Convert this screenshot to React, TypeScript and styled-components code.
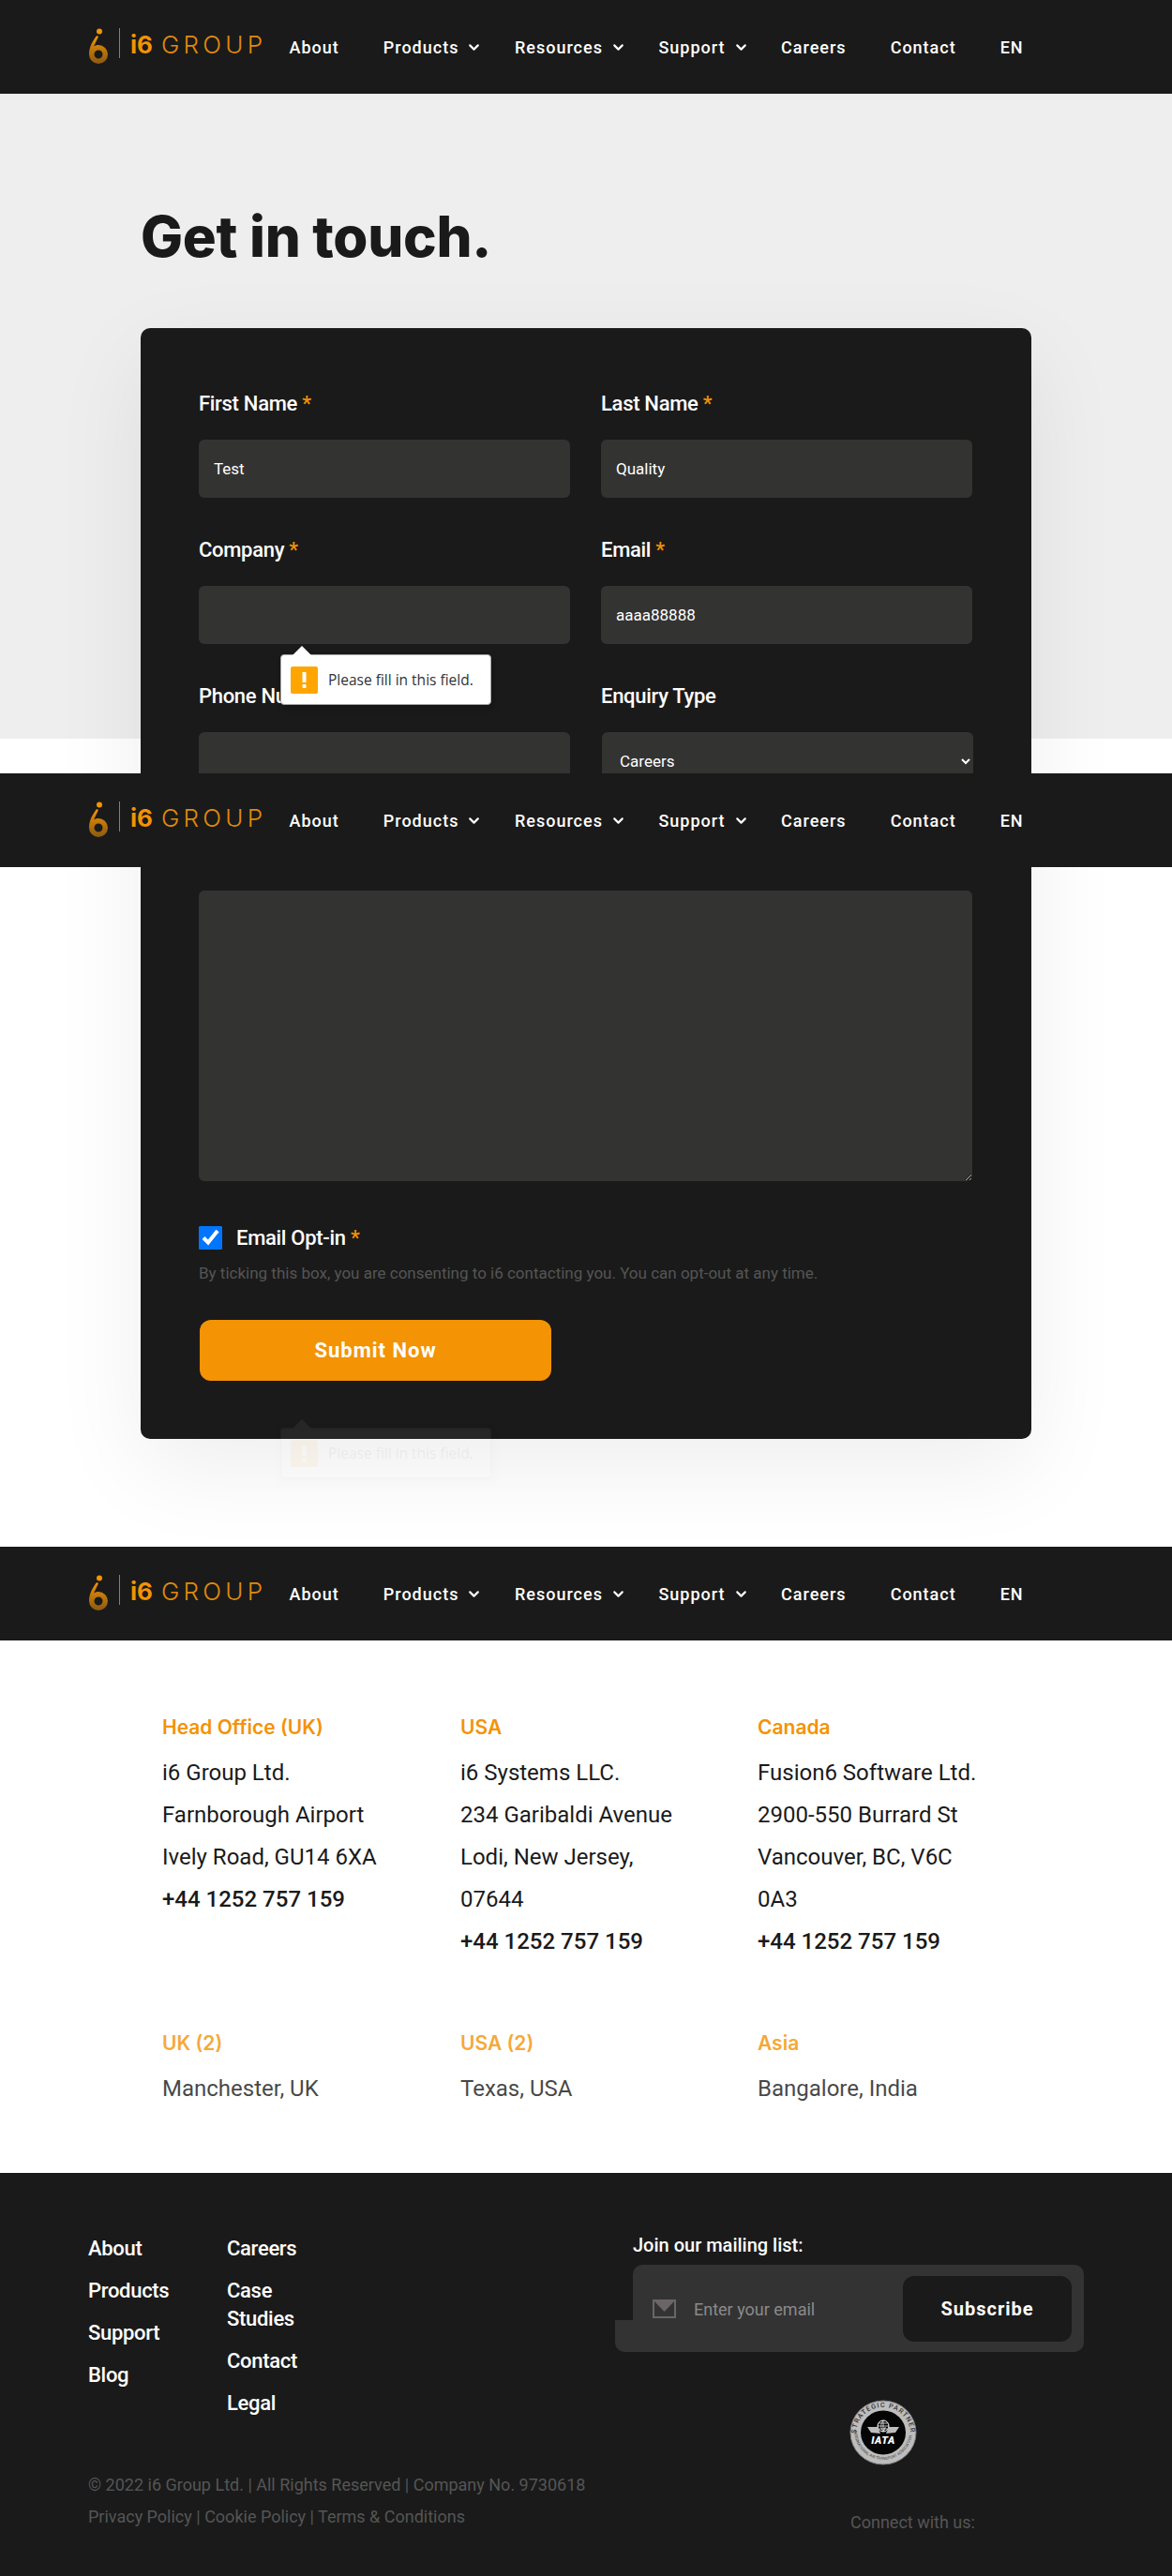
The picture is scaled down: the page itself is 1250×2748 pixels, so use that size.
import React from 'react';
import styled, { createGlobalStyle } from 'styled-components';
import { ChevronDown } from 'lucide-react';

const GlobalStyle = createGlobalStyle`
  html, body {
    margin: 0;
    padding: 0;
    background: #fff;
  }
  body {
    font-family: Roboto, "Liberation Sans", sans-serif;
    color: #1a1a1a;
  }
  * {
    box-sizing: border-box;
  }
`;

const Page = styled.div`
  position: relative;
  width: 1250px;
  height: 2748px;
  overflow: hidden;
`;

/* the header is fixed on the real page, so a stitched capture shows it three times */
const Header = styled.header<{ $top: number }>`
  position: absolute;
  top: ${(p) => p.$top}px;
  left: 0;
  z-index: 5;
  width: 100%;
  height: 100px;
  padding-left: 94px;
  display: flex;
  align-items: center;
  background: #1a1a1a;
`;

const LogoWrap = styled.svg`
  display: block;
  width: 190px;
  height: 44px;
  margin-right: 1px;
`;

const NavLink = styled.a<{ $dropdown?: boolean }>`
  display: flex;
  align-items: center;
  gap: 8px;
  padding: 0 ${(p) => (p.$dropdown ? '11px' : '23.5px')} 0 23.5px;
  color: #fff;
  font-size: 18px;
  font-weight: 500;
  letter-spacing: 1px;
  white-space: nowrap;
`;

const ContactSection = styled.section`
  height: 1650px;
  padding: 215px 0 0 150px;
  background: linear-gradient(#eeeeee 788px, #fff 788px);
`;

const Title = styled.h1`
  margin: 0 0 61px;
  height: 74px;
  font-family: Inter, "Liberation Sans", sans-serif;
  font-size: 60px;
  line-height: 74px;
  font-weight: 800;
  letter-spacing: -0.3px;
  color: #1a1a1a;
`;

const Card = styled.form`
  width: 950px;
  padding: 62px 63px 62px 62px;
  background: #1a1a1a;
  border-radius: 10px;
  box-shadow: 0 30px 100px rgba(0, 0, 0, 0.07);
`;

const FieldGrid = styled.div`
  display: grid;
  grid-template-columns: 396px 396px;
  column-gap: 33px;
  row-gap: 37px;
`;

const Field = styled.div`
  display: flex;
  flex-direction: column;
`;

const Label = styled.label`
  height: 38px;
  margin-bottom: 19px;
  color: #fff;
  font-size: 22px;
  line-height: 38px;
  font-weight: 500;
  letter-spacing: -0.3px;
`;

const Required = styled.span`
  color: #f49303;
`;

const Input = styled.input`
  width: 100%;
  height: 62px;
  padding: 0 16px;
  border: 0;
  border-radius: 6px;
  outline: 0;
  background: #333332;
  color: #fff;
  font-family: Roboto, sans-serif;
  font-size: 17px;
`;

const Select = styled.select`
  width: 396px;
  height: 62px;
  margin-left: 1px;
  padding: 0 15px;
  border: 0;
  border-radius: 6px;
  background-color: #333332;
  color: #fff;
  font-family: Roboto, sans-serif;
  font-size: 17px;
`;

const Message = styled.textarea`
  display: block;
  width: 825px;
  height: 310px;
  margin-top: 107px;
  padding: 16px;
  border: 0;
  border-radius: 6px;
  outline: 0;
  background: #333332;
  color: #fff;
  resize: vertical;
`;

const OptRow = styled.div`
  display: flex;
  align-items: center;
  gap: 15px;
  margin-top: 48px;
  height: 25px;
`;

const OptBox = styled.input`
  width: 25px;
  height: 25px;
  margin: 0;
  accent-color: #0075ff;
`;

const OptLabel = styled.label`
  color: #fff;
  font-size: 22px;
  line-height: 25px;
  font-weight: 500;
  letter-spacing: -0.3px;
`;

const OptHint = styled.p`
  margin: 13px 0 0;
  color: #555;
  font-size: 17px;
  line-height: 24px;
`;

const SubmitButton = styled.button`
  display: block;
  width: 375px;
  height: 65px;
  margin: 38px 0 0 1px;
  border: 0;
  border-radius: 12px;
  background: #f49303;
  color: #fff;
  font-family: Roboto, sans-serif;
  font-size: 22px;
  font-weight: 700;
  letter-spacing: 1px;
`;

const Tooltip = styled.div<{ $top: number; $ghost?: boolean }>`
  position: absolute;
  top: ${(p) => p.$top}px;
  left: 299px;
  z-index: 3;
  width: 225px;
  height: 54px;
  padding-left: 10px;
  display: flex;
  align-items: center;
  gap: 11px;
  background: #fff;
  border: 1px solid #a8a8a8;
  border-radius: 4px;
  box-shadow: 2px 3px 6px rgba(0, 0, 0, 0.25);
  color: #333;
  font-family: "Open Sans", sans-serif;
  font-size: 15.5px;
  white-space: nowrap;
  opacity: ${(p) => (p.$ghost ? 0.05 : 1)};

  &::before {
    content: '';
    position: absolute;
    top: -10px;
    left: 12px;
    width: 20px;
    height: 10px;
    background: #fff;
    clip-path: polygon(50% 0, 100% 100%, 0 100%);
  }
`;

const WarnIcon = styled.svg`
  flex: none;
  width: 29px;
  height: 29px;
`;

const OfficeSection = styled.section`
  height: 668px;
  padding: 175px 0 0 173px;
`;

const OfficeGrid = styled.div`
  display: grid;
  grid-template-columns: 318px 317px 250px;
  row-gap: 68px;
`;

const Office = styled.div<{ $muted?: boolean }>`
  width: 250px;
  opacity: ${(p) => (p.$muted ? 0.8 : 1)};
`;

const OfficeName = styled.h3`
  margin: 0 0 8px;
  color: #f49303;
  font-family: Inter, sans-serif;
  font-size: 21px;
  line-height: 36px;
  font-weight: 600;
`;

const OfficeLine = styled.div<{ $strong?: boolean }>`
  color: #1a1a1a;
  font-size: 24px;
  line-height: 45px;
  font-weight: ${(p) => (p.$strong ? 500 : 400)};
`;

const Footer = styled.footer`
  height: 430px;
  padding: 66px 0 0 94px;
  display: flex;
  background: #1a1a1a;
`;

const FooterLeft = styled.div`
  width: 581px;
`;

const LinkColumns = styled.div`
  display: flex;
  height: 206px;
`;

const LinkColumn = styled.div<{ $width: number }>`
  width: ${(p) => p.$width}px;
  display: flex;
  flex-direction: column;
  gap: 15px;
`;

const FooterLink = styled.a`
  color: #fff;
  font-size: 22px;
  line-height: 30px;
  font-weight: 500;
  letter-spacing: -0.3px;
`;

const Legal = styled.div`
  margin-top: 44px;
  color: #555;
  font-size: 18px;
  line-height: 34px;
`;

const FooterRight = styled.div`
  width: 481px;
`;

const JoinTitle = styled.div`
  color: #fff;
  font-size: 20px;
  line-height: 22px;
  font-weight: 500;
`;

const MailBox = styled.div`
  position: relative;
  width: 481px;
  height: 93px;
  margin-top: 10px;
  padding: 12px 12px 0 21px;
  display: flex;
  align-items: flex-start;
  background: #333;
  border-radius: 10px;

  &::before {
    content: '';
    position: absolute;
    left: -19px;
    bottom: 0;
    width: 40px;
    height: 34px;
    background: #333;
    border-radius: 0 0 0 10px;
  }
`;

const MailIcon = styled.svg`
  position: relative;
  flex: none;
  width: 25px;
  height: 20px;
  margin-top: 25px;
`;

const MailInput = styled.input`
  position: relative;
  width: 223px;
  height: 70px;
  margin-left: 19px;
  padding: 0;
  border: 0;
  outline: 0;
  background: transparent;
  color: #fff;
  font-family: Roboto, sans-serif;
  font-size: 18px;

  &::placeholder {
    color: #8a8a8a;
    opacity: 1;
  }
`;

const SubscribeButton = styled.button`
  width: 180px;
  height: 70px;
  border: 0;
  border-radius: 12px;
  background: #1a1a1a;
  color: #fff;
  font-family: Roboto, sans-serif;
  font-size: 20px;
  font-weight: 700;
  letter-spacing: 1px;
`;

const Badge = styled.svg`
  display: block;
  width: 72px;
  height: 70px;
  margin: 51px 0 0 231px;
`;

const Connect = styled.div`
  margin: 44px 0 0 232px;
  color: #555;
  font-size: 18px;
  line-height: 34px;
`;

const Logo = () => (
  <LogoWrap viewBox="0 0 190 44">
    <defs>
      <linearGradient id="logoFade" x1="0" y1="0" x2="0" y2="1">
        <stop offset="0" stopColor="#f49303" />
        <stop offset="1" stopColor="#8a5a12" />
      </linearGradient>
    </defs>
    <circle cx="12" cy="5.5" r="3" fill="#f49303" />
    <path
      d="M9 10 C3 18 1 24 1 30 a10 10 0 1 0 10 -10 c-2 0 -4 .6 -5 1.5 L11 11 Z M11 25.5 a4.5 4.5 0 1 1 0 9 a4.5 4.5 0 0 1 0 -9 Z"
      fill="url(#logoFade)"
      fillRule="evenodd"
    />
    <rect x="33" y="2" width="1" height="32" fill="#b77a14" />
    <text x="45" y="29" fontFamily="Inter, sans-serif" fontSize="26" fontWeight="700" fill="#f49303" textLength="24">
      i6
    </text>
    <text x="78" y="29" fontFamily="Inter, sans-serif" fontSize="26" fontWeight="300" fill="#e08a0a" textLength="108">
      GROUP
    </text>
  </LogoWrap>
);

const SiteHeader = ({ top }: { top: number }) => (
  <Header $top={top}>
    <Logo />
    <NavLink>About</NavLink>
    <NavLink $dropdown>
      Products <ChevronDown size={17} strokeWidth={3} />
    </NavLink>
    <NavLink $dropdown>
      Resources <ChevronDown size={17} strokeWidth={3} />
    </NavLink>
    <NavLink $dropdown>
      Support <ChevronDown size={17} strokeWidth={3} />
    </NavLink>
    <NavLink>Careers</NavLink>
    <NavLink>Contact</NavLink>
    <NavLink>EN</NavLink>
  </Header>
);

const FieldTip = ({ top, ghost }: { top: number; ghost?: boolean }) => (
  <Tooltip $top={top} $ghost={ghost}>
    <WarnIcon viewBox="0 0 29 29">
      <rect width="29" height="29" rx="2" fill="#ffa500" />
      <rect x="12.5" y="6" width="4" height="11" fill="#fff" />
      <rect x="12.5" y="19" width="4" height="4" rx="1" fill="#fff" />
    </WarnIcon>
    Please fill in this field.
  </Tooltip>
);

const IataBadge = () => (
  <Badge viewBox="0 0 72 70">
    <defs>
      <path id="arcTop" d="M7 36 A29 28 0 0 1 65 36" />
      <path id="arcBottom" d="M5 33 A31 31 0 0 0 67 33" />
    </defs>
    <ellipse cx="36" cy="35" rx="35" ry="34" fill="#bdbdbd" stroke="#7d7d7d" />
    <ellipse cx="36" cy="35" rx="24" ry="23.5" fill="#050505" />
    <text fontFamily="Roboto, sans-serif" fontSize="7.2" fill="#333" fontWeight="500">
      <textPath href="#arcTop" textLength="88">
        STRATEGIC PARTNER
      </textPath>
    </text>
    <text fontFamily="Roboto, sans-serif" fontSize="4.2" fill="#444">
      <textPath href="#arcBottom" textLength="92">
        INTERNATIONAL AIR TRANSPORT ASSOCIATION
      </textPath>
    </text>
    <circle cx="36" cy="28" r="6" fill="none" stroke="#fff" strokeWidth="1" />
    <path d="M30 28 H42 M36 22 V34 M31 25 H41 M31 31 H41" stroke="#fff" strokeWidth=".7" />
    <path d="M36 22 C33 25 33 31 36 34 C39 31 39 25 36 34" fill="none" stroke="#fff" strokeWidth=".6" />
    <path d="M19 29 L30 29 L33 36 L23 35 Z M53 29 L42 29 L39 36 L49 35 Z" fill="#bdbdbd" />
    <text x="36" y="47" textAnchor="middle" fontFamily="Roboto, sans-serif" fontSize="11" fontStyle="italic" fontWeight="900" fill="#fff" letterSpacing=".6">
      IATA
    </text>
  </Badge>
);

const offices = [
  { name: 'Head Office (UK)', lines: ['i6 Group Ltd.', 'Farnborough Airport', 'Ively Road, GU14 6XA'], phone: '+44 1252 757 159' },
  { name: 'USA', lines: ['i6 Systems LLC.', '234 Garibaldi Avenue', 'Lodi, New Jersey, 07644'], phone: '+44 1252 757 159' },
  { name: 'Canada', lines: ['Fusion6 Software Ltd.', '2900-550 Burrard St', 'Vancouver, BC, V6C 0A3'], phone: '+44 1252 757 159' },
  { name: 'UK (2)', lines: ['Manchester, UK'], muted: true },
  { name: 'USA (2)', lines: ['Texas, USA'], muted: true },
  { name: 'Asia', lines: ['Bangalore, India'], muted: true },
];

const App: React.FC = () => {
  return (
    <Page>
      <GlobalStyle />
      <SiteHeader top={0} />
      <SiteHeader top={825} />
      <SiteHeader top={1650} />
      <FieldTip top={698} />
      <FieldTip top={1523} ghost />

      <ContactSection>
        <Title>Get in touch.</Title>
        <Card onSubmit={(e) => e.preventDefault()}>
          <FieldGrid>
            <Field>
              <Label>
                First Name <Required>*</Required>
              </Label>
              <Input defaultValue="Test" />
            </Field>
            <Field>
              <Label>
                Last Name <Required>*</Required>
              </Label>
              <Input defaultValue="Quality" />
            </Field>
            <Field>
              <Label>
                Company <Required>*</Required>
              </Label>
              <Input />
            </Field>
            <Field>
              <Label>
                Email <Required>*</Required>
              </Label>
              <Input defaultValue="aaaa88888" />
            </Field>
            <Field>
              <Label>Phone Number</Label>
              <Input />
            </Field>
            <Field>
              <Label>Enquiry Type</Label>
              <Select defaultValue="Careers">
                <option>Careers</option>
              </Select>
            </Field>
          </FieldGrid>
          <Message />
          <OptRow>
            <OptBox type="checkbox" defaultChecked />
            <OptLabel>
              Email Opt-in <Required>*</Required>
            </OptLabel>
          </OptRow>
          <OptHint>By ticking this box, you are consenting to i6 contacting you. You can opt-out at any time.</OptHint>
          <SubmitButton type="submit">Submit Now</SubmitButton>
        </Card>
      </ContactSection>

      <OfficeSection>
        <OfficeGrid>
          {offices.map((office) => (
            <Office key={office.name} $muted={office.muted}>
              <OfficeName>{office.name}</OfficeName>
              {office.lines.map((line) => (
                <OfficeLine key={line}>{line}</OfficeLine>
              ))}
              {office.phone && <OfficeLine $strong>{office.phone}</OfficeLine>}
            </Office>
          ))}
        </OfficeGrid>
      </OfficeSection>

      <Footer>
        <FooterLeft>
          <LinkColumns>
            <LinkColumn $width={148}>
              <FooterLink>About</FooterLink>
              <FooterLink>Products</FooterLink>
              <FooterLink>Support</FooterLink>
              <FooterLink>Blog</FooterLink>
            </LinkColumn>
            <LinkColumn $width={100}>
              <FooterLink>Careers</FooterLink>
              <FooterLink>Case Studies</FooterLink>
              <FooterLink>Contact</FooterLink>
              <FooterLink>Legal</FooterLink>
            </LinkColumn>
          </LinkColumns>
          <Legal>
            © 2022 i6 Group Ltd. | All Rights Reserved | Company No. 9730618
            <br />
            Privacy Policy | Cookie Policy | Terms &amp; Conditions
          </Legal>
        </FooterLeft>
        <FooterRight>
          <JoinTitle>Join our mailing list:</JoinTitle>
          <MailBox>
            <MailIcon viewBox="0 0 25 20">
              <rect x="1" y="1" width="23" height="18" fill="none" stroke="#6a6567" strokeWidth="2" />
              <path d="M1 1 H24 L12.5 13 Z" fill="#6a6567" />
            </MailIcon>
            <MailInput placeholder="Enter your email" />
            <SubscribeButton type="button">Subscribe</SubscribeButton>
          </MailBox>
          <IataBadge />
          <Connect>Connect with us:</Connect>
        </FooterRight>
      </Footer>
    </Page>
  );
};

export default App;
